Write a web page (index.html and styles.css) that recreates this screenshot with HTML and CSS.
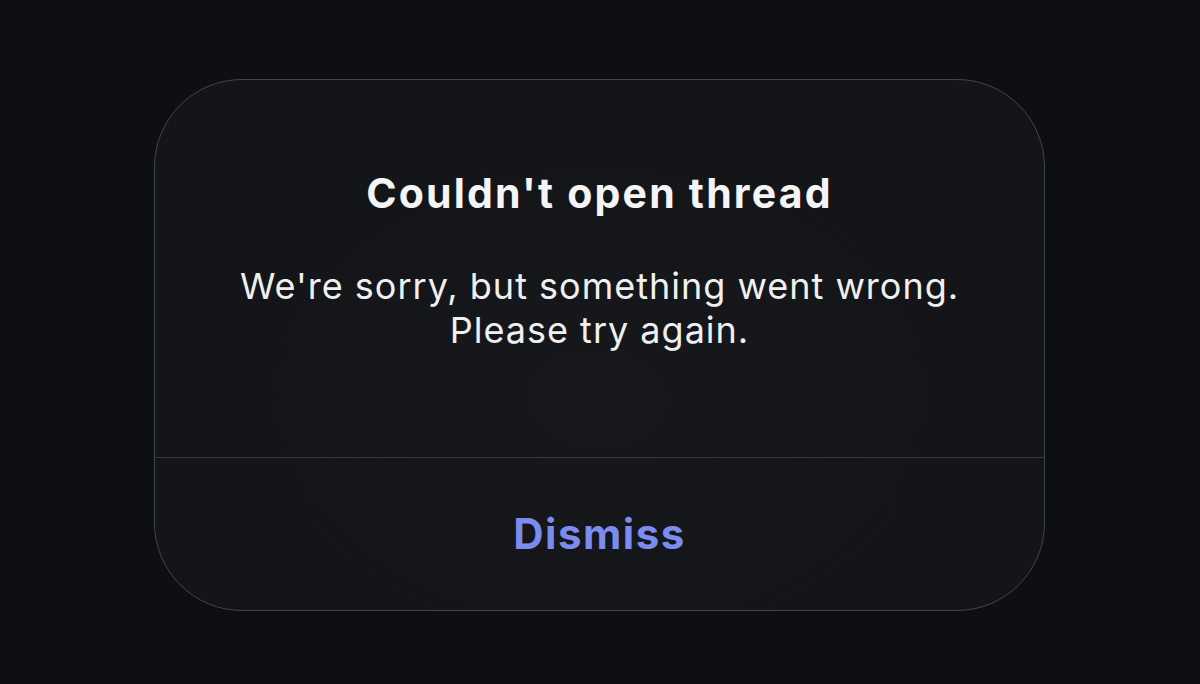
FILE: index.html
```html
<!DOCTYPE html>
<html>
<head>
<meta charset="utf-8">
<link rel="stylesheet" href="styles.css">
</head>
<body>
<div class="page">
  <div class="alert">
    <div class="alert-body">
      <h1 class="title">Couldn't open thread</h1>
      <p class="message">We're sorry, but something went wrong.<br>Please try again.</p>
    </div>
    <div class="alert-actions">
      <button class="btn">Dismiss</button>
    </div>
  </div>
</div>
</body>
</html>
```
FILE: styles.css
```css
html, body {
  margin: 0;
  padding: 0;
  background: #0d0f14;
}
body {
  width: 1200px;
  height: 684px;
  overflow: hidden;
  font-family: Inter, "Noto Sans", sans-serif;
}
.page {
  padding-top: 79px;
  display: flex;
  justify-content: center;
}
.alert {
  width: 889px;
  height: 530px;
  margin-left: -1px;
  border: 1.5px solid #42454b;
  border-radius: 88px;
  background: radial-gradient(ellipse at 50% 60%, #16181c 0%, #131519 60%);
  display: flex;
  flex-direction: column;
  overflow: hidden;
}
.alert-body {
  height: 378px;
  border-bottom: 1.5px solid #34373c;
  display: flex;
  flex-direction: column;
  align-items: center;
  padding-top: 89px;
  box-sizing: border-box;
}
.title {
  margin: 0;
  color: #f5f5f7;
  font-size: 41px;
  font-weight: 700;
  line-height: 48px;
  letter-spacing: 2.2px;
}
.message {
  margin: 47px 0 0;
  color: #f0f0f2;
  font-size: 36px;
  font-weight: 400;
  line-height: 44px;
  letter-spacing: 1px;
  text-align: center;
}
.alert-actions {
  flex: 1;
  display: flex;
  align-items: center;
  justify-content: center;
}
.btn {
  background: none;
  border: none;
  padding: 0;
  color: #7a8cf0;
  font-family: Inter, "Noto Sans", sans-serif;
  font-size: 42px;
  font-weight: 700;
  line-height: 48px;
  letter-spacing: 1.5px;
}
```
